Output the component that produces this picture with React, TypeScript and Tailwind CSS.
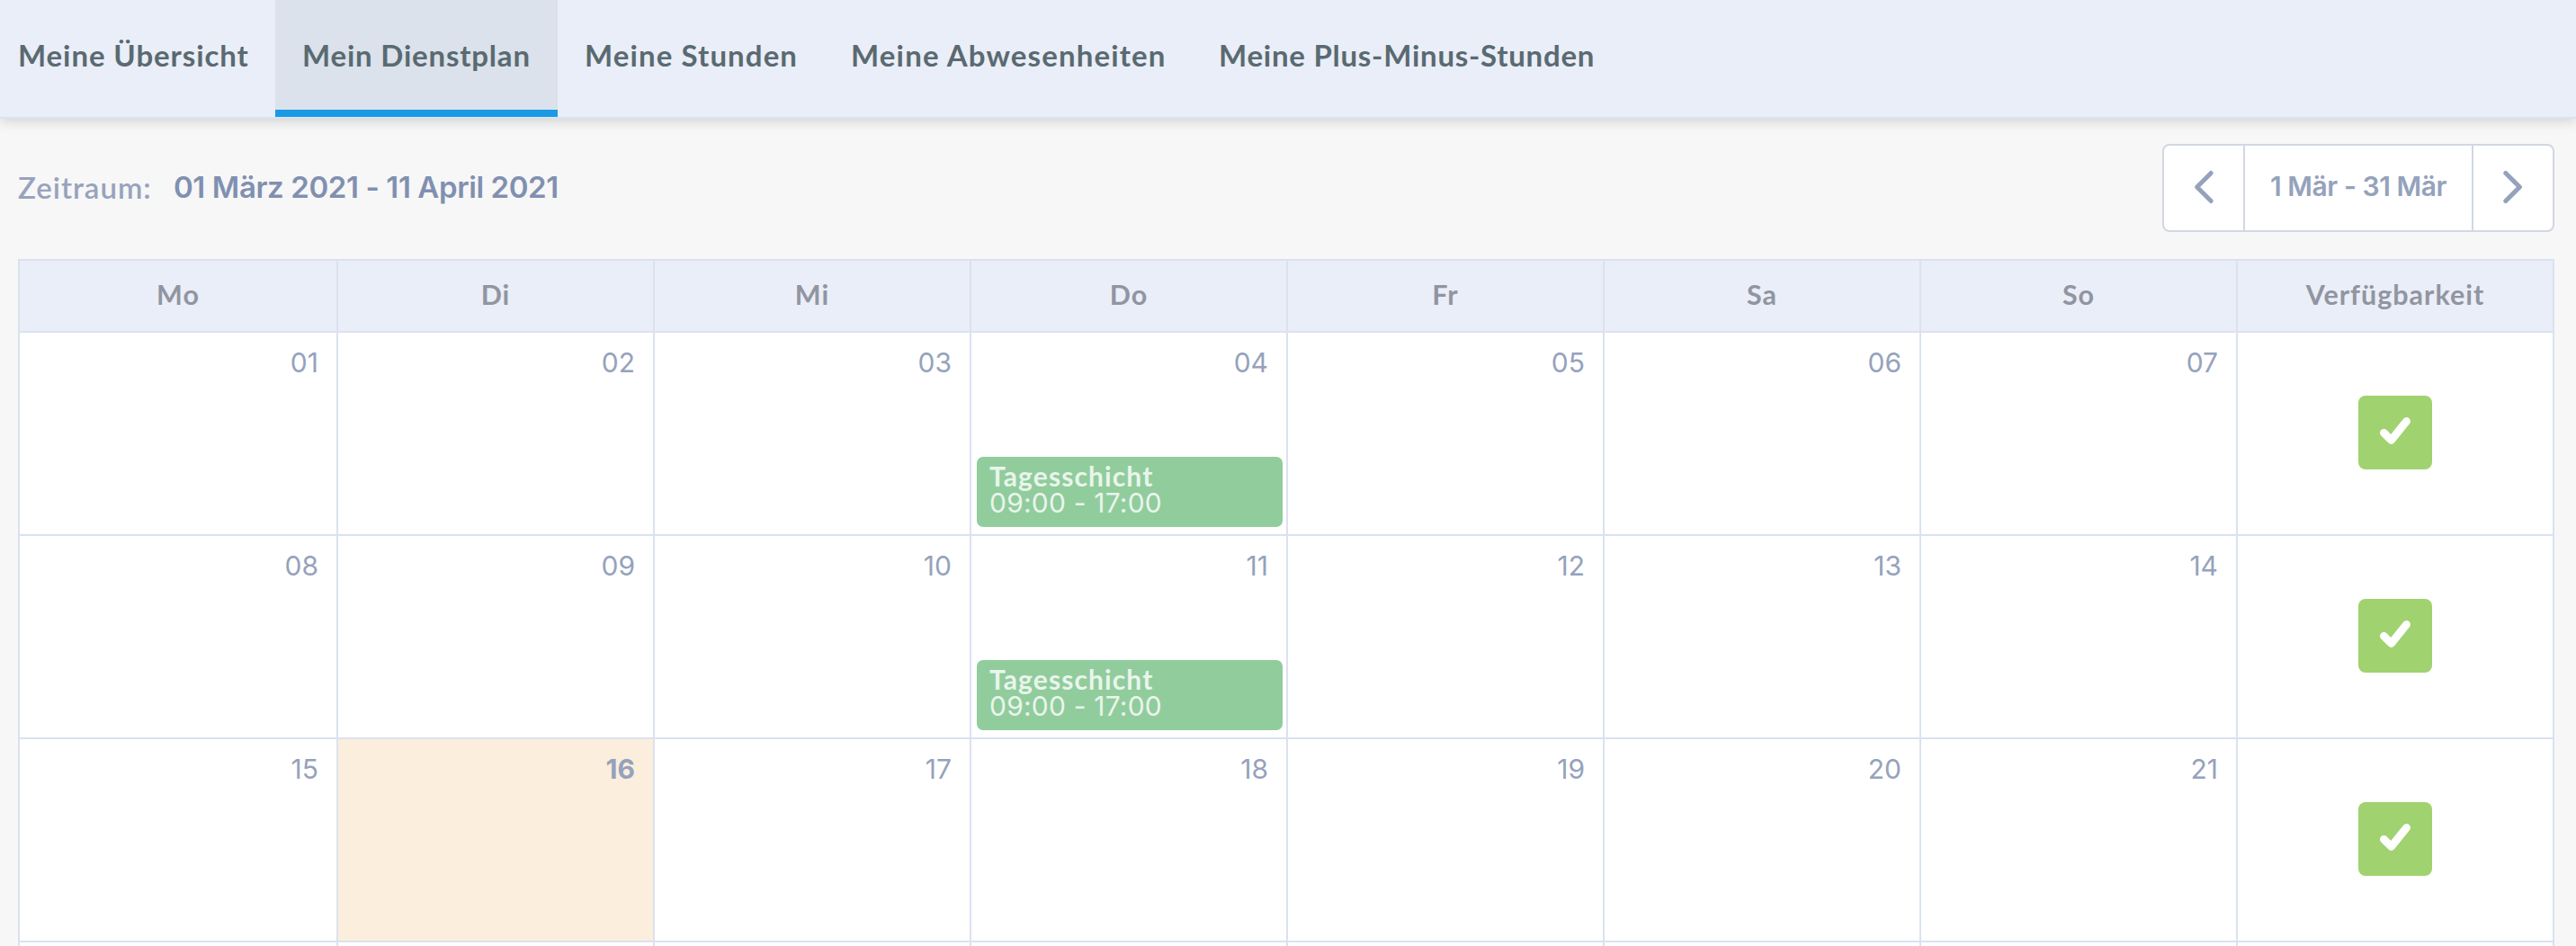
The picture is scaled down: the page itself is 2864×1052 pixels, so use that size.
import clsx from "clsx";

interface Shift {
  name: string;
  time: string;
}

interface Day {
  label: string;
  today?: boolean;
  shift?: Shift;
}

const TABS = [
  { label: "Meine Übersicht", className: "w-[306px] pl-5 tracking-[0.9px]" },
  { label: "Mein Dienstplan", className: "w-[314px] pl-[30px] tracking-[0.8px]", active: true },
  { label: "Meine Stunden", className: "w-[296px] pl-[30px] tracking-[1.1px]" },
  { label: "Meine Abwesenheiten", className: "w-[409px] pl-[30px] tracking-[1.15px]" },
  { label: "Meine Plus-Minus-Stunden", className: "w-[476px] pl-[30px] tracking-[0.75px]" },
];

const HEADERS = ["Mo", "Di", "Mi", "Do", "Fr", "Sa", "So", "Verfügbarkeit"];

const DAY_SHIFT: Shift = { name: "Tagesschicht", time: "09:00 - 17:00" };

const WEEKS: Day[][] = [
  [
    { label: "01" },
    { label: "02" },
    { label: "03" },
    { label: "04", shift: DAY_SHIFT },
    { label: "05" },
    { label: "06" },
    { label: "07" },
  ],
  [
    { label: "08" },
    { label: "09" },
    { label: "10" },
    { label: "11", shift: DAY_SHIFT },
    { label: "12" },
    { label: "13" },
    { label: "14" },
  ],
  [
    { label: "15" },
    { label: "16", today: true },
    { label: "17" },
    { label: "18" },
    { label: "19" },
    { label: "20" },
    { label: "21" },
  ],
];

function TabBar() {
  return (
    <nav className="relative z-10 flex h-[132px] shrink-0 border-b-2 border-[#d9e4f4] bg-[#eaeef8] shadow-[0_2px_14px_rgba(0,0,0,0.17)]">
      {TABS.map((tab) => (
        <button
          key={tab.label}
          type="button"
          className={clsx(
            "h-[130px] shrink-0 whitespace-nowrap border-b-8 pt-0.5 text-left text-[33px] font-bold text-[#5a6a71]",
            tab.active ? "border-[#1a9ae5] bg-[#dbe2eb]" : "border-transparent",
            tab.className
          )}
        >
          {tab.label}
        </button>
      ))}
    </nav>
  );
}

function Chevron({ direction }: { direction: "left" | "right" }) {
  return (
    <svg
      className="h-[94px] w-[88px]"
      viewBox="0 0 88 94"
      fill="none"
      stroke="#95a2bc"
      strokeWidth={5}
      strokeLinecap="round"
      strokeLinejoin="round"
    >
      <path d={direction === "left" ? "M52.2 30.4 36.6 46 52.2 61.6" : "M35.8 30.4 51.4 46 35.8 61.6"} />
    </svg>
  );
}

function RangePicker() {
  return (
    <div className="flex h-[98px] w-[436px] items-stretch overflow-hidden rounded-lg border-2 border-[#d1d7e3] bg-white">
      <button type="button" className="w-[88px]" aria-label="Zurück">
        <Chevron direction="left" />
      </button>
      <div className="flex flex-1 items-center justify-center whitespace-nowrap border-x-2 border-[#d1d7e3] pb-[3px] font-[Inter,sans-serif] text-[30px] font-semibold tracking-[-0.45px] text-[#95a2bc]">
        1 Mär - 31 Mär
      </div>
      <button type="button" className="w-[88px]" aria-label="Weiter">
        <Chevron direction="right" />
      </button>
    </div>
  );
}

function ShiftCard({ shift }: { shift: Shift }) {
  return (
    <div className="mt-auto mr-1 mb-2 ml-1.5 h-[78px] rounded-[7px] bg-[#91cc9d] pt-1.5 pl-3.5 text-[#e9f5eb]">
      <div className="text-[30px] leading-[30px] font-bold tracking-[1.1px]">{shift.name}</div>
      <div className="font-[Inter,sans-serif] text-[30px] leading-[30px] font-normal tracking-[0.2px]">
        {shift.time}
      </div>
    </div>
  );
}

function DayCell({ day }: { day: Day }) {
  return (
    <div className={clsx("flex flex-col border-r-2 border-b-2 border-[#dae2f0]", day.today && "bg-[#fbeedd]")}>
      <span
        className={clsx(
          "pt-[15px] pr-5 text-right font-[Inter,sans-serif] text-[30px] leading-9 text-[#95a2bc]",
          day.today ? "font-bold" : "font-normal"
        )}
      >
        {day.label}
      </span>
      {day.shift && <ShiftCard shift={day.shift} />}
    </div>
  );
}

function AvailabilityCell() {
  return (
    <div className="flex items-start justify-center border-r-2 border-b-2 border-[#dae2f0] pt-[70px]">
      <div className="size-[82px] rounded-lg bg-[#a0d270]">
        <svg
          className="size-[82px]"
          viewBox="0 0 82 82"
          fill="none"
          stroke="#fff"
          strokeWidth={8.8}
          strokeLinecap="round"
          strokeLinejoin="round"
        >
          <path d="M28.4 41.3 36.6 49.5 53.5 28.5" />
        </svg>
      </div>
    </div>
  );
}

export default function App() {
  return (
    <div className="flex h-[1052px] w-[2864px] flex-col overflow-hidden bg-[#f7f7f7] font-[Lato,sans-serif]">
      <TabBar />

      <div className="flex shrink-0 items-center justify-between px-5 pt-7 pr-6 pb-[30px]">
        <div className="flex items-center whitespace-nowrap">
          <span className="w-[173px] pb-px text-[33px] font-semibold tracking-[1px] text-[#97a3bd]">Zeitraum:</span>
          <span className="font-[Inter,sans-serif] text-[33px] font-semibold tracking-[-0.4px] text-[#8090b0]">
            01 März 2021 - 11 April 2021
          </span>
        </div>
        <RangePicker />
      </div>

      <div className="ml-5 grid w-[2820px] shrink-0 auto-rows-[226px] grid-cols-[354px_repeat(7,352px)] grid-rows-[80px] border-t-2 border-l-2 border-[#dae2f0] bg-white">
        {HEADERS.map((header) => (
          <div
            key={header}
            className="flex items-center justify-center border-r-2 border-b-2 border-[#dae2f0] bg-[#eaeef8] pb-[2px] text-[30.5px] font-bold tracking-[1px] text-[#9195a1]"
          >
            {header}
          </div>
        ))}
        {WEEKS.map((week) => [
          ...week.map((day) => <DayCell key={day.label} day={day} />),
          <AvailabilityCell key={`${week[0].label}-availability`} />,
        ])}
        {/* top edge of the following week, clipped by the viewport */}
        {HEADERS.map((header) => (
          <div key={`next-${header}`} className="border-r-2 border-[#dae2f0]" />
        ))}
      </div>
    </div>
  );
}
